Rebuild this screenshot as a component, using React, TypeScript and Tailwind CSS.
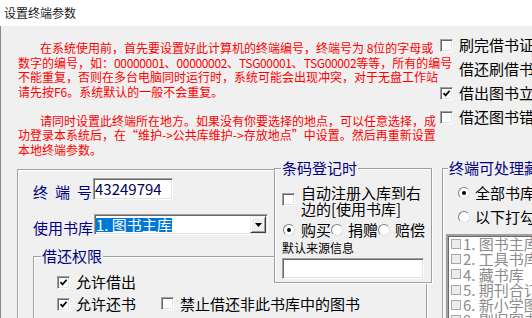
import React from "react";

// classic win32 look: etched groups, sunken edits
const etched = "border border-[#a0a0a0] shadow-[inset_1px_1px_0_#fff,1px_1px_0_#fff]";
const sunken =
  "border border-t-[#a0a0a0] border-l-[#a0a0a0] border-r-white border-b-white shadow-[inset_1px_1px_0_#696969,inset_-1px_-1px_0_#e3e3e3]";

function Check({ checked }: { checked?: boolean }) {
  return (
    <span className={`inline-flex h-[13px] w-[13px] shrink-0 items-center justify-center bg-white ${sunken}`}>
      {checked && (
        <svg width="9" height="9" viewBox="0 0 9 9">
          <path d="M1.5 4.2 L3.6 6.4 L7.6 1.8" fill="none" stroke="#000" strokeWidth="1.7" />
        </svg>
      )}
    </span>
  );
}

function Radio({ on }: { on?: boolean }) {
  return (
    <span className="inline-flex h-[12px] w-[12px] shrink-0 items-center justify-center rounded-full border border-t-[#808080] border-l-[#808080] border-r-[#e0e0e0] border-b-[#e0e0e0] bg-white">
      {on && <span className="h-[4px] w-[4px] rounded-full bg-black" />}
    </span>
  );
}

function ListItem({ text }: { text: string }) {
  return (
    <div className="flex h-[15.3px] items-center gap-[2px] pl-[3px]">
      <span className="h-[10px] w-[10px] shrink-0 border border-[#a8a8a8] bg-[#ececec]" />
      <span className="text-[15px] leading-[15.3px] text-[#8c8c8c]">{text}</span>
    </div>
  );
}

// latin runs in the notes are half-width in the original font
const Lat = ({ children }: { children: React.ReactNode }) => (
  <span className="tracking-[-0.35px]">{children}</span>
);

export default function App() {
  return (
    <div className="flex h-[318px] w-[532px] flex-col overflow-hidden bg-[#f0f0f0] font-['Noto_Sans_CJK_SC',sans-serif] text-black whitespace-nowrap">
      {/* title bar */}
      <div className="flex h-[26px] shrink-0 items-center bg-white pl-[4px] text-[12px] leading-[14px] text-[#1a1a1a]">
        设置终端参数
      </div>

      <div className="flex flex-1 flex-col border-l border-[#8a8a8a]">
        {/* notes + option checkboxes */}
        <div className="flex h-[134px] shrink-0">
          <div className="w-[439px] shrink-0 pl-[17px] pt-[15px] text-[12px] leading-[14.5px] text-[#f00]">
            <div className="pl-[22px]">在系统使用前，首先要设置好此计算机的终端编号，终端号为 8位的字母或</div>
            <div>
              数字的编号，如：<Lat>00000001</Lat>、<Lat>00000002</Lat>、<Lat>TSG00001</Lat>、<Lat>TSG00002</Lat>等等，所有的编号
            </div>
            <div>不能重复，否则在多台电脑同时运行时，系统可能会出现冲突，对于无盘工作站</div>
            <div>请先按F6。系统默认的一般不会重复。</div>
            <div className="mt-[14.5px] pl-[22px]">请同时设置此终端所在地方。如果没有你要选择的地点，可以任意选择，成</div>
            <div>功登录本系统后，在“维护-&gt;公共库维护-&gt;存放地点”中设置。然后再重新设置</div>
            <div>本地终端参数。</div>
          </div>
          <div className="flex flex-col pt-[7px] text-[15px] leading-[24px]">
            <div className="flex h-[24px] items-center gap-[6px]">
              <Check />
              <span>刷完借书证后</span>
            </div>
            <div className="h-[24px] pl-[19px]">借还刷借书证</div>
            <div className="flex h-[24px] items-center gap-[6px]">
              <Check checked />
              <span>借出图书立即</span>
            </div>
            <div className="flex h-[24px] items-center gap-[6px]">
              <Check />
              <span>借还图书错误</span>
            </div>
          </div>
        </div>

        {/* lower controls */}
        <div className="flex items-start">
          {/* terminal / library panel */}
          <div className="w-[273px] shrink-0 pl-[16px]">
            <div className="mt-[9px] h-[200px] border-t border-l border-[#a0a0a0] pl-[15px] pt-[8px] shadow-[inset_1px_1px_0_#fff]">
              <div className="flex items-start">
                <div className="flex w-[60px] justify-between pt-[3px] pr-[1px] text-[15px] leading-[22px] text-[#000080]">
                  <span>终</span>
                  <span>端</span>
                  <span>号</span>
                </div>
                <div className={`flex h-[22px] w-[80px] items-center bg-white pl-[1px] text-[15px] leading-[16px] text-[#00005a] ${sunken}`}>
                  43249794
                </div>
              </div>

              <div className="mt-[11px] flex items-start">
                <div className="w-[61px] pt-[3px] text-[15px] leading-[22px] text-[#000080]">使用书库</div>
                <div className={`flex h-[21px] w-[174px] items-center justify-between bg-white pl-[1px] ${sunken}`}>
                  <span className="bg-[#0078d7] text-[15px] leading-[14px] text-white">1. 图书主库</span>
                  <span className="mr-[1px] flex h-[17px] w-[16px] items-center justify-center border border-t-[#f0f0f0] border-l-[#f0f0f0] border-r-[#404040] border-b-[#404040] bg-[#f0f0f0] shadow-[inset_1px_1px_0_#fff,inset_-1px_-1px_0_#a0a0a0]">
                    <svg width="7" height="4" viewBox="0 0 7 4">
                      <path d="M0 0 H7 L3.5 4 Z" fill="#000" />
                    </svg>
                  </span>
                </div>
              </div>

              <fieldset className={`mt-[9px] h-[73px] w-[394px] ${etched}`}>
                <legend className="ml-[7px] bg-[#f0f0f0] px-[1px] text-[15px] leading-[16px] text-[#000080]">借还权限</legend>
                <div className="mt-[7px] flex h-[22px] items-center gap-[6px] pl-[23px] text-[15px] leading-[22px]">
                  <Check checked />
                  <span>允许借出</span>
                </div>
                <div className="flex h-[22px] items-center pl-[23px] text-[15px] leading-[22px]">
                  <Check checked />
                  <span className="ml-[6px]">允许还书</span>
                  <span className="ml-[25px]">
                    <Check />
                  </span>
                  <span className="ml-[6px]">禁止借还非此书库中的图书</span>
                </div>
              </fieldset>
            </div>
          </div>

          {/* barcode registration group */}
          <fieldset className={`relative z-10 h-[123px] w-[158px] shrink-0 bg-[#f0f0f0] ${etched}`}>
            <legend className="ml-[6px] bg-[#f0f0f0] px-[1px] text-[15px] leading-[16px] text-[#000080]">条码登记时</legend>
            <div className="mt-[9px] flex items-start gap-[6px] pl-[7px]">
              <span className="mt-[2px]">
                <Check />
              </span>
              <div className="text-[15px] leading-[16px]">
                <div>自动注册入库到右</div>
                <div>边的[使用书库]</div>
              </div>
            </div>
            <div className="mt-[5px] flex h-[16px] items-center pl-[8px] text-[15px] leading-[16px]">
              <Radio on />
              <span className="ml-[6px]">购买</span>
              <Radio />
              <span className="ml-[5px]">捐赠</span>
              <Radio />
              <span className="ml-[5px]">赔偿</span>
            </div>
            <div className="mt-[3px] pl-[7px] text-[12px] leading-[14px]">默认来源信息</div>
            <div className={`mt-[3px] ml-[7px] h-[21px] w-[142px] bg-white ${sunken}`} />
          </fieldset>

          {/* libraries this terminal can handle */}
          <fieldset className={`ml-[10px] h-[170px] w-[130px] shrink-0 ${etched}`}>
            <legend className="ml-[5px] bg-[#f0f0f0] px-[1px] text-[15px] leading-[16px] text-[#000080]">终端可处理藏书库</legend>
            <div className="mt-[9px] flex h-[16px] items-center pl-[15px] text-[15px] leading-[16px]">
              <Radio on />
              <span className="ml-[5px]">全部书库</span>
            </div>
            <div className="mt-[8px] flex h-[16px] items-center pl-[15px] text-[15px] leading-[16px]">
              <Radio />
              <span className="ml-[5px]">以下打勾的书库</span>
            </div>
            <div className={`mt-[9px] ml-[3px] h-[110px] w-[130px] border-2 bg-white ${sunken}`}>
              <ListItem text="1. 图书主库" />
              <ListItem text="2. 工具书库" />
              <ListItem text="4. 藏书库" />
              <ListItem text="5. 期刊合订本" />
              <ListItem text="6. 新小学图书" />
              <ListItem text="9. 剔旧图书" />
            </div>
          </fieldset>
        </div>
      </div>
    </div>
  );
}
